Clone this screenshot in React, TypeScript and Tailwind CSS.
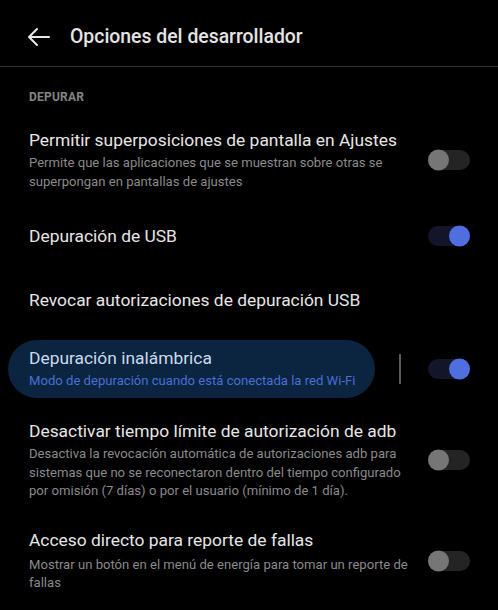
import React from 'react';

type Row = {
  title: string;
  sub?: string;
  on?: boolean;
  wrap: string;
  subTop: string;
};

function Toggle({ on }: { on?: boolean }) {
  return (
    <div
      className={`relative h-[20px] w-[42px] shrink-0 rounded-full ${
        on ? 'bg-[#13162a]' : 'bg-[#242424]'
      }`}
    >
      <span
        className={`absolute top-1/2 h-[21px] w-[21px] -translate-y-1/2 rounded-full ${
          on ? 'right-0 bg-[#4f6ee0]' : 'left-0 bg-[#767676]'
        }`}
      />
    </div>
  );
}

function SettingRow({ row }: { row: Row }) {
  return (
    <div className={`flex items-center pl-[29px] pr-[28px] ${row.wrap}`}>
      <div className="w-[382px]">
        <div className="text-[17.4px] leading-[22px] text-[#e6e6e6]">{row.title}</div>
        {row.sub && (
          <div className={`text-[13.1px] leading-[18.5px] text-[#8a8a8a] ${row.subTop}`}>{row.sub}</div>
        )}
      </div>
      <div className="ml-auto">
        <Toggle on={row.on} />
      </div>
    </div>
  );
}

export default function App() {
  return (
    <div className="h-[610px] w-[498px] overflow-hidden bg-black font-['Roboto',sans-serif]">
      <header className="flex h-[67px] items-center border-b border-[#2e2e2e] pt-[8px]">
        <svg className="ml-[27px] h-[24px] w-[24px]" viewBox="0 0 24 24" fill="none" stroke="#e8e8e8" strokeWidth="2" strokeLinecap="round" strokeLinejoin="round">
          <path d="M22 12H2M10 4l-8 8 8 8" />
        </svg>
        <h1 className="ml-[19px] text-[19.4px] font-medium text-[#e4e4e4]">Opciones del desarrollador</h1>
      </header>

      <div className="pl-[29px] pt-[22px] text-[12px] font-bold leading-[16px] tracking-[0.2px] text-[#858585]">DEPURAR</div>

      <SettingRow
        row={{
          title: 'Permitir superposiciones de pantalla en Ajustes',
          sub: 'Permite que las aplicaciones que se muestran sobre otras se superpongan en pantallas de ajustes',
          wrap: 'mt-[24px]',
          subTop: 'mt-[3px]',
        }}
      />
      <SettingRow row={{ title: 'Depuración de USB', on: true, wrap: 'mt-[34px]', subTop: '' }} />
      <div className="mt-[42px] pl-[29px] text-[17.4px] leading-[22px] text-[#e6e6e6]">
        Revocar autorizaciones de depuración USB
      </div>

      {/* selected row */}
      <div className="mt-[29px] flex items-center pr-[28px]">
        <div className="ml-[8px] w-[367px] rounded-full bg-[#0b2440] pb-[8px] pl-[21px] pt-[7px]">
          <div className="text-[17.4px] leading-[22px] text-[#c9dbee]">Depuración inalámbrica</div>
          <div className="mt-[3px] text-[13.1px] leading-[18px] text-[#4a6fd6]">
            Modo de depuración cuando está conectada la red Wi-Fi
          </div>
        </div>
        <div className="ml-[24px] h-[30px] w-[2px] bg-[#5a5a5a]" />
        <div className="ml-auto">
          <Toggle on />
        </div>
      </div>

      <SettingRow
        row={{
          title: 'Desactivar tiempo límite de autorización de adb',
          sub: 'Desactiva la revocación automática de autorizaciones adb para sistemas que no se reconectaron dentro del tiempo configurado por omisión (7 días) o por el usuario (mínimo de 1 día).',
          wrap: 'mt-[22px]',
          subTop: 'mt-[3px]',
        }}
      />
      <SettingRow
        row={{
          title: 'Acceso directo para reporte de fallas',
          sub: 'Mostrar un botón en el menú de energía para tomar un reporte de fallas',
          wrap: 'mt-[28px]',
          subTop: 'mt-[5px]',
        }}
      />
    </div>
  );
}
